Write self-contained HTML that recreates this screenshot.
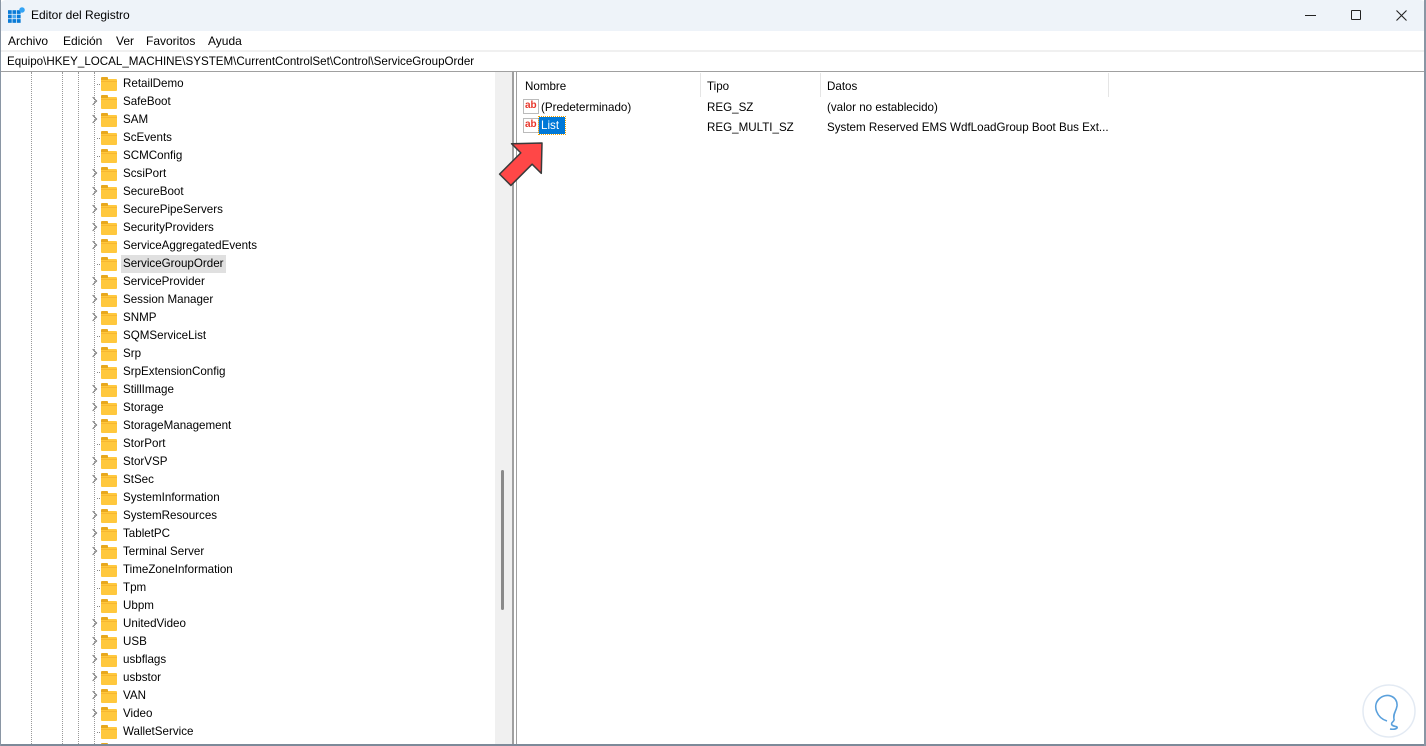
<!DOCTYPE html>
<html><head><meta charset="utf-8"><style>
*{margin:0;padding:0;box-sizing:border-box}
body{width:1426px;height:746px;overflow:hidden;background:#fff;font-family:"Liberation Sans",sans-serif;font-size:11.6px;color:#000;position:relative}
.a{position:absolute}
.title{left:0;top:0;width:1426px;height:31px;background:#eef3f9;border-radius:6px 6px 0 0}
.menu{left:0;top:31px;width:1426px;height:19px;background:#fff}
.menu span{position:absolute;top:3px;font-size:12px}
.addr{left:0;top:50px;width:1426px;height:22px;background:#fff;border-top:2px solid #f0f0f0;border-bottom:1px solid #a0a0a0}
.tree{left:2px;top:72px;width:494px;height:672px;overflow:hidden}
.row{position:absolute;height:18px;left:0;width:494px}
.row .t{position:absolute;left:119px;top:2px;white-space:nowrap;padding:0 2px}
.fold{position:absolute;left:99px;top:4px;width:16px;height:12px;background:#ffc83d;border-radius:1px}
.fold:before{content:"";position:absolute;left:0;top:-2px;width:7px;height:3px;background:#e8a81e;border-radius:1px 1px 0 0}
.fold:after{content:"";position:absolute;left:0;top:2px;width:16px;height:1px;background:#f7b731}
.chev{position:absolute;left:88px;top:5px;width:6px;height:6px;border-right:1.3px solid #777;border-top:1.3px solid #777;transform:rotate(45deg)}
.dot{position:absolute;left:95px;top:9px;width:5px;border-top:1px dotted #888}
.vl{position:absolute;top:72px;height:674px;border-left:1px dotted #999}
</style></head><body>
<div class="a title"></div>
<svg class="a" style="left:8px;top:7px" width="17" height="17" viewBox="0 0 16 16"><g fill="#0a7bd7"><rect x="0" y="3" width="3.5" height="3.5"/><rect x="4.2" y="3" width="3.5" height="3.5"/><rect x="8.4" y="3" width="3.5" height="3.5"/><rect x="0" y="7.2" width="3.5" height="3.5"/><rect x="4.2" y="7.2" width="3.5" height="3.5" fill="#4aa8f0"/><rect x="8.4" y="7.2" width="3.5" height="3.5"/><rect x="0" y="11.4" width="3.5" height="3.5"/><rect x="4.2" y="11.4" width="3.5" height="3.5"/><rect x="8.4" y="11.4" width="3.5" height="3.5"/></g><circle cx="13.2" cy="2.8" r="2.6" fill="#33a3f4"/></svg>
<div class="a" style="left:31px;top:8px;font-size:12px">Editor del Registro</div>
<div class="a" style="left:1305px;top:15px;width:11px;height:1px;background:#222"></div>
<div class="a" style="left:1351px;top:10px;width:10px;height:10px;border:1px solid #222;border-radius:1px"></div>
<svg class="a" style="left:1396px;top:10px" width="11" height="11"><path d="M0.5 0.5L10.5 10.5M10.5 0.5L0.5 10.5" stroke="#222" stroke-width="1.1"/></svg>
<div class="a menu"><span style="left:8px">Archivo</span><span style="left:63px">Edición</span><span style="left:116px">Ver</span><span style="left:146px">Favoritos</span><span style="left:208px">Ayuda</span></div>
<div class="a addr"><span style="position:absolute;left:7px;top:3px;font-size:11.6px">Equipo\HKEY_LOCAL_MACHINE\SYSTEM\CurrentControlSet\Control\ServiceGroupOrder</span></div>
<div class="vl" style="left:31px"></div><div class="vl" style="left:62px"></div><div class="vl" style="left:78px"></div><div class="vl" style="left:94px"></div>
<div class="a tree" id="tree"></div>
<div class="a" style="left:495px;top:72px;width:17px;height:672px;background:#f0f0f0"></div>
<div class="a" style="left:501px;top:470px;width:3px;height:140px;background:#8a8a8a;border-radius:2px"></div>
<div class="a" style="left:512px;top:72px;width:2px;height:674px;background:#a0a0a0"></div>
<div class="a" style="left:516px;top:72px;width:1px;height:674px;background:#a0a0a0"></div>
<div class="a" style="left:517px;top:73px;width:906px;height:24px;background:#fff"></div>
<div class="a" style="left:525px;top:80px">Nombre</div>
<div class="a" style="left:700px;top:73px;width:1px;height:24px;background:#e5e5e5"></div>
<div class="a" style="left:707px;top:80px">Tipo</div>
<div class="a" style="left:820px;top:73px;width:1px;height:24px;background:#e5e5e5"></div>
<div class="a" style="left:827px;top:80px">Datos</div>
<div class="a" style="left:1108px;top:73px;width:1px;height:24px;background:#e5e5e5"></div>
<div class="a" style="left:523px;top:99px;width:16px;height:15px;border:1px solid #bbb;background:#fff;color:#e8362b;font-weight:bold;font-size:10px;line-height:12px;padding-left:1px">ab</div>
<div class="a" style="left:541px;top:101px">(Predeterminado)</div>
<div class="a" style="left:707px;top:101px">REG_SZ</div>
<div class="a" style="left:827px;top:101px">(valor no establecido)</div>
<div class="a" style="left:523px;top:118px;width:16px;height:15px;border:1px solid #bbb;background:#fff;color:#e8362b;font-weight:bold;font-size:10px;line-height:12px;padding-left:1px">ab</div>
<div class="a" style="left:539px;top:117px;width:26px;height:17px;background:#0078d7;color:#fff;padding:2px 0 0 2px;outline:1px dotted #f0a000">List</div>
<div class="a" style="left:707px;top:121px">REG_MULTI_SZ</div>
<div class="a" style="left:827px;top:121px">System Reserved EMS WdfLoadGroup Boot Bus Ext...</div>
<svg class="a" style="left:490px;top:135px" width="70" height="70"><g transform="translate(52,8) rotate(45)"><path d="M0 0 L21 22 L8 22 L8 52 L-8 52 L-8 22 L-21 22 Z" fill="#ff4747" stroke="#3a3a3a" stroke-width="1.5" stroke-linejoin="round"/></g></svg>
<svg class="a" style="left:1362px;top:684px" width="54" height="54"><circle cx="27" cy="27" r="26" fill="#fff" stroke="#e3eaf3" stroke-width="1.5"/><path d="M25 37 C15 34 10 22 17 15 C24 8 36 12 35 22 C34 28 31 29 32 35 C33 38 28 38 30 41 C32 43 36 42 35 44 C33 46 28 45 28 45" fill="none" stroke="#5aa0dc" stroke-width="1.6"/></svg>
<div class="a" style="left:0;top:744px;width:1426px;height:2px;background:#7d8a99"></div>
<div class="a" style="left:1424px;top:0;width:2px;height:746px;background:#8a96a4"></div>
<div class="a" style="left:0;top:0;width:1px;height:746px;background:#8a96a4"></div>
<script>
var items=[["RetailDemo",0],["SafeBoot",1],["SAM",1],["ScEvents",0],["SCMConfig",0],["ScsiPort",1],["SecureBoot",1],["SecurePipeServers",1],["SecurityProviders",1],["ServiceAggregatedEvents",1],["ServiceGroupOrder",0],["ServiceProvider",1],["Session Manager",1],["SNMP",1],["SQMServiceList",0],["Srp",1],["SrpExtensionConfig",0],["StillImage",1],["Storage",1],["StorageManagement",1],["StorPort",0],["StorVSP",1],["StSec",1],["SystemInformation",0],["SystemResources",1],["TabletPC",1],["Terminal Server",1],["TimeZoneInformation",0],["Tpm",0],["Ubpm",0],["UnitedVideo",1],["USB",1],["usbflags",1],["usbstor",1],["VAN",1],["Video",1],["WalletService",0],["",1]];
var h="";items.forEach(function(it,i){var y=3+i*18;h+='<div class="row" style="top:'+y+'px">'+(it[1]?'<div class="chev"></div>':'<div class="dot"></div>')+'<div class="fold"></div>'+(it[0]?'<div class="t"'+(it[0]=="ServiceGroupOrder"?' style="background:#e0e0e0;height:18px;top:0;padding-top:2px"':'')+'>'+it[0]+'</div>':'')+'</div>';});
document.getElementById("tree").innerHTML=h;
</script>
</body></html>
